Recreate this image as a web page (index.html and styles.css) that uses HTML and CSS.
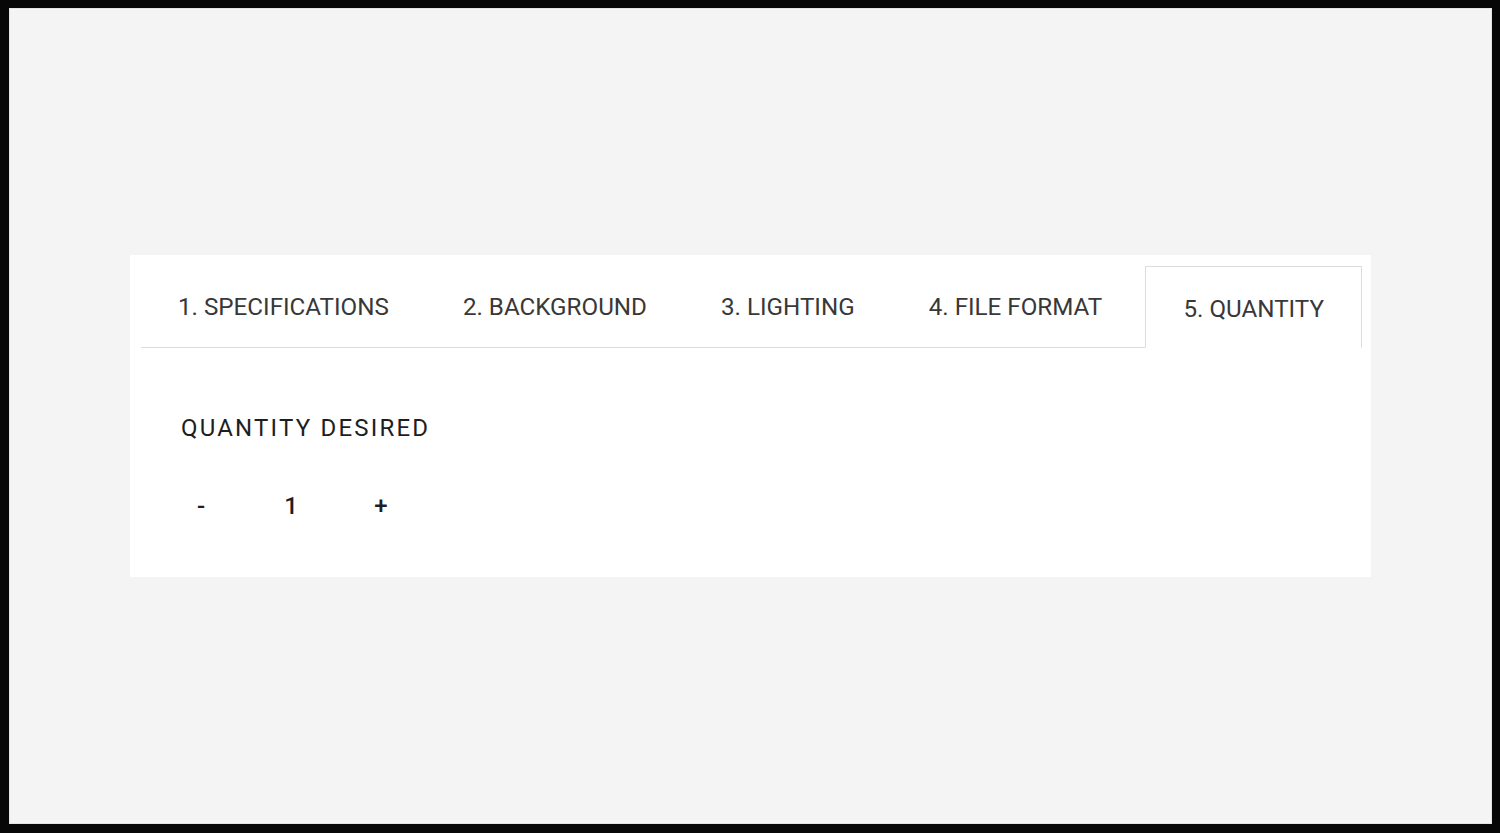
FILE: index.html
```html
<!DOCTYPE html>
<html lang="en">
<head>
<meta charset="utf-8">
<title>Quantity</title>
<link rel="stylesheet" href="styles.css">
</head>
<body>
<div class="frame">
  <div class="card">
    <ul class="tabs">
      <li class="tab"><a href="#">1. SPECIFICATIONS</a></li>
      <li class="tab"><a href="#">2. BACKGROUND</a></li>
      <li class="tab"><a href="#">3. LIGHTING</a></li>
      <li class="tab"><a href="#">4. FILE FORMAT</a></li>
      <li class="tab active"><a href="#">5. QUANTITY</a></li>
    </ul>
    <div class="panel">
      <h3 class="label">QUANTITY DESIRED</h3>
      <div class="counter">
        <button class="step">-</button>
        <span class="value">1</span>
        <button class="step">+</button>
      </div>
    </div>
  </div>
</div>
</body>
</html>
```

FILE: styles.css
```css
* { box-sizing: border-box; }
html, body { margin: 0; padding: 0; }
body {
  background: #070707;
  font-family: Roboto, "Liberation Sans", sans-serif;
  height: 833px;
  padding: 8px 8px 9px 9px;
}
.frame {
  height: 816px;
  background: #f4f4f4;
  border: 1px solid #e4e4e4;
  display: flex;
  align-items: center;
  justify-content: center;
}
.card {
  width: 1241px;
  height: 322px;
  background: #fff;
  padding: 11px 9px 0 11px;
}
.tabs {
  list-style: none;
  margin: 0;
  padding: 0;
  display: flex;
  border-bottom: 1px solid #dcdcdc;
}
.tab {
  margin-bottom: -1px;
  flex-shrink: 0;
  white-space: nowrap;
}
.tab a {
  display: block;
  padding: 28px 36px;
  font-size: 24.2px;
  line-height: 24px;
  color: #383838;
  text-decoration: none;
  border: 1px solid transparent;
}
.tab.active a {
  padding: 30px 37px 26px;
  border-color: #dcdcdc #dcdcdc #fff;
  background: #fff;
}
.tabs .active { margin-left: auto; }
.panel {
  padding: 66px 40px 0;
}
.label {
  margin: 0;
  font-size: 24px;
  font-weight: 400;
  letter-spacing: 2.2px;
  line-height: 28px;
  color: #1e1e1e;
}
.counter {
  display: flex;
  align-items: center;
  margin-top: 50px;
}
.step, .value {
  width: 40px;
  font-family: inherit;
  font-size: 24px;
  font-weight: 500;
  line-height: 28px;
  color: #1e1e1e;
  text-align: center;
  background: none;
  border: 0;
  padding: 0;
}
.value { margin: 0 50px; }
```
